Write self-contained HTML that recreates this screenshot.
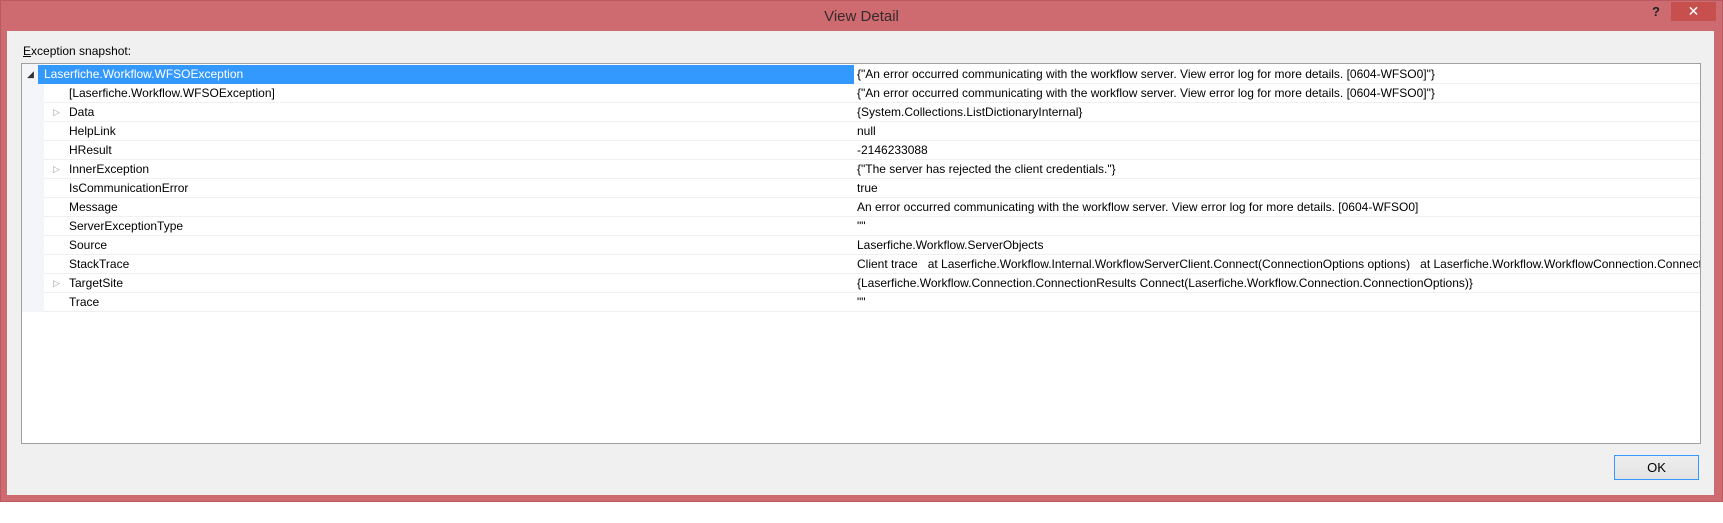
<!DOCTYPE html>
<html><head><meta charset="utf-8"><style>
*{margin:0;padding:0;box-sizing:border-box}
body{width:1723px;height:523px;background:#fff;position:relative;overflow:hidden;font-family:"Liberation Sans",sans-serif;font-size:12px;color:#000}
.frame{position:absolute;left:0;top:0;width:1723px;height:502px;background:#cd6b70;border:1px solid #b85a60}
.title{position:absolute;left:0;width:1723px;top:8px;text-align:center;font-size:15px;color:#3a2a2c}
.help{position:absolute;left:1652px;top:4px;font-size:13px;font-weight:bold;color:#222}
.close{position:absolute;left:1671px;top:2px;width:45px;height:19px;background:#c7504f;color:#fff;text-align:center;font-size:14px;line-height:19px}
.client{position:absolute;left:7px;top:31px;width:1707px;height:464px;background:#f0f0f0}
.lbl{position:absolute;left:23px;top:44px;color:#000}
.box{position:absolute;left:21px;top:63px;width:1680px;height:381px;background:#fff;border:1px solid #a0a0a0;overflow:hidden}
.gut{position:absolute;left:0;top:0;width:22px;height:248px;background:#f3f5f9}
.row{position:absolute;left:22px;width:1656px;height:19px;border-bottom:1px solid #f0f0f0;white-space:nowrap;line-height:18px}
.n{position:absolute;left:25px}
.v{position:absolute;left:813px}
.sel{background:#3399ff;color:#fff;position:absolute;left:-6px;width:816px;height:19px}
.arr{position:absolute;left:9px;top:0;color:#a0a0a0;font-size:9px}
.ok{position:absolute;left:1614px;top:455px;width:85px;height:25px;border:1px solid #3399ff;background:linear-gradient(#eee,#e3e3e3);text-align:center;line-height:23px;font-size:13px}
</style></head><body>
<div class="frame"></div>
<div class="title">View Detail</div>
<div class="help">?</div>
<div class="close">✕</div>
<div class="client"></div>
<div class="lbl"><u>E</u>xception snapshot:</div>
<div class="box">
<div class="gut"></div>
<div class="row" style="top:1px"><div class="sel"></div><span style="position:absolute;left:-17px;color:#333;font-size:9px">◢</span><span class="n" style="left:0;color:#fff">Laserfiche.Workflow.WFSOException</span><span class="v">{"An error occurred communicating with the workflow server. View error log for more details. [0604-WFSO0]"}</span></div>
<div class="row" style="top:20px"><span class="n">[Laserfiche.Workflow.WFSOException]</span><span class="v">{"An error occurred communicating with the workflow server. View error log for more details. [0604-WFSO0]"}</span></div>
<div class="row" style="top:39px"><span class="arr">▷</span><span class="n">Data</span><span class="v">{System.Collections.ListDictionaryInternal}</span></div>
<div class="row" style="top:58px"><span class="n">HelpLink</span><span class="v">null</span></div>
<div class="row" style="top:77px"><span class="n">HResult</span><span class="v">-2146233088</span></div>
<div class="row" style="top:96px"><span class="arr">▷</span><span class="n">InnerException</span><span class="v">{"The server has rejected the client credentials."}</span></div>
<div class="row" style="top:115px"><span class="n">IsCommunicationError</span><span class="v">true</span></div>
<div class="row" style="top:134px"><span class="n">Message</span><span class="v">An error occurred communicating with the workflow server. View error log for more details. [0604-WFSO0]</span></div>
<div class="row" style="top:153px"><span class="n">ServerExceptionType</span><span class="v">""</span></div>
<div class="row" style="top:172px"><span class="n">Source</span><span class="v">Laserfiche.Workflow.ServerObjects</span></div>
<div class="row" style="top:191px;overflow:hidden"><span class="n">StackTrace</span><span class="v">Client trace &nbsp;&nbsp;at Laserfiche.Workflow.Internal.WorkflowServerClient.Connect(ConnectionOptions options) &nbsp;&nbsp;at Laserfiche.Workflow.WorkflowConnection.ConnectInternal</span></div>
<div class="row" style="top:210px"><span class="arr">▷</span><span class="n">TargetSite</span><span class="v">{Laserfiche.Workflow.Connection.ConnectionResults Connect(Laserfiche.Workflow.Connection.ConnectionOptions)}</span></div>
<div class="row" style="top:229px"><span class="n">Trace</span><span class="v">""</span></div>
</div>
<div class="ok">OK</div>
</body></html>
